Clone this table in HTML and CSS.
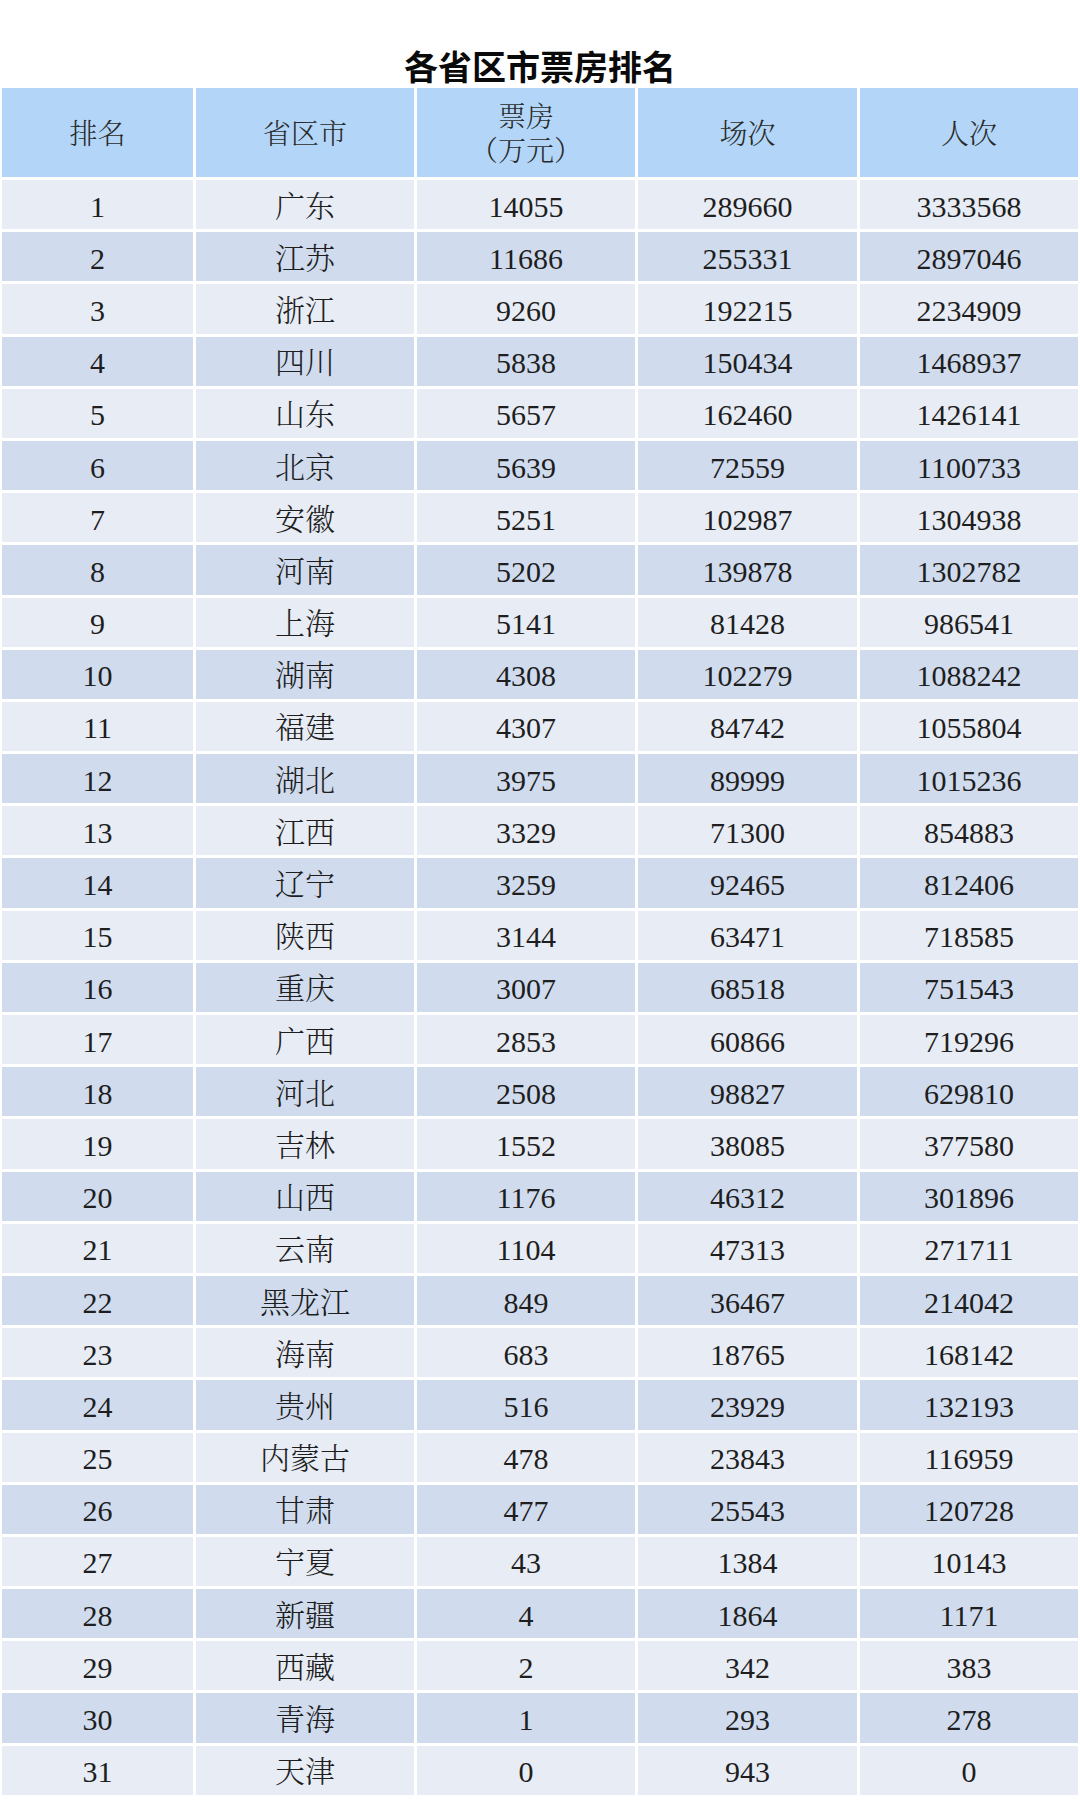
FILE: index.html
```html
<!DOCTYPE html>
<html lang="zh-CN">
<head>
<meta charset="utf-8">
<title>各省区市票房排名</title>
<link rel="stylesheet" href="styles.css">
</head>
<body>
<h1 class="title">各省区市票房排名</h1>
<div class="table" id="table">
  <div class="cell head">排名</div>
  <div class="cell head">省区市</div>
  <div class="cell head two">票房<br>（万元）</div>
  <div class="cell head">场次</div>
  <div class="cell head">人次</div>
</div>
<script src="script.js"></script>
</body>
</html>
```

FILE: script.js
```js
const rows = [
["1","广东","14055","289660","3333568"],
["2","江苏","11686","255331","2897046"],
["3","浙江","9260","192215","2234909"],
["4","四川","5838","150434","1468937"],
["5","山东","5657","162460","1426141"],
["6","北京","5639","72559","1100733"],
["7","安徽","5251","102987","1304938"],
["8","河南","5202","139878","1302782"],
["9","上海","5141","81428","986541"],
["10","湖南","4308","102279","1088242"],
["11","福建","4307","84742","1055804"],
["12","湖北","3975","89999","1015236"],
["13","江西","3329","71300","854883"],
["14","辽宁","3259","92465","812406"],
["15","陕西","3144","63471","718585"],
["16","重庆","3007","68518","751543"],
["17","广西","2853","60866","719296"],
["18","河北","2508","98827","629810"],
["19","吉林","1552","38085","377580"],
["20","山西","1176","46312","301896"],
["21","云南","1104","47313","271711"],
["22","黑龙江","849","36467","214042"],
["23","海南","683","18765","168142"],
["24","贵州","516","23929","132193"],
["25","内蒙古","478","23843","116959"],
["26","甘肃","477","25543","120728"],
["27","宁夏","43","1384","10143"],
["28","新疆","4","1864","1171"],
["29","西藏","2","342","383"],
["30","青海","1","293","278"],
["31","天津","0","943","0"]
];
const table = document.getElementById("table");
rows.forEach((r, i) => {
  r.forEach(v => {
    const d = document.createElement("div");
    d.className = "cell " + (i % 2 === 0 ? "odd" : "even");
    d.textContent = v;
    table.appendChild(d);
  });
});
```

FILE: styles.css
```css
html, body {
  margin: 0;
  padding: 0;
  background: #ffffff;
}
body {
  width: 1080px;
  font-family: "Liberation Serif", "Noto Serif CJK SC", "Noto Sans CJK SC", serif;
  color: #1e1e1e;
}
.title {
  margin: 0;
  padding-top: 44px;
  height: 44px;
  line-height: 44px;
  text-align: center;
  font-family: "Noto Sans CJK SC", sans-serif;
  font-weight: 700;
  font-size: 34px;
  color: #0a0a0a;
}
.table {
  display: grid;
  grid-template-columns: 191px 218px 218px 219px 218px;
  grid-template-rows: 89px;
  grid-auto-rows: 49.2px;
  gap: 3px;
  margin-left: 2px;
  width: 1076px;
}
.cell {
  display: flex;
  align-items: center;
  justify-content: center;
  text-align: center;
  font-size: 30px;
  font-weight: 300;
  line-height: 1;
  padding-top: 4px;
  box-sizing: border-box;
}
.head {
  background: #b3d6f8;
  color: #2a2a2a;
  font-size: 28px;
  padding-top: 5px;
}
.head.two {
  line-height: 34px;
  padding-top: 4px;
}
.odd {
  background: #e8ecf5;
}
.even {
  background: #d0dcee;
}
```
